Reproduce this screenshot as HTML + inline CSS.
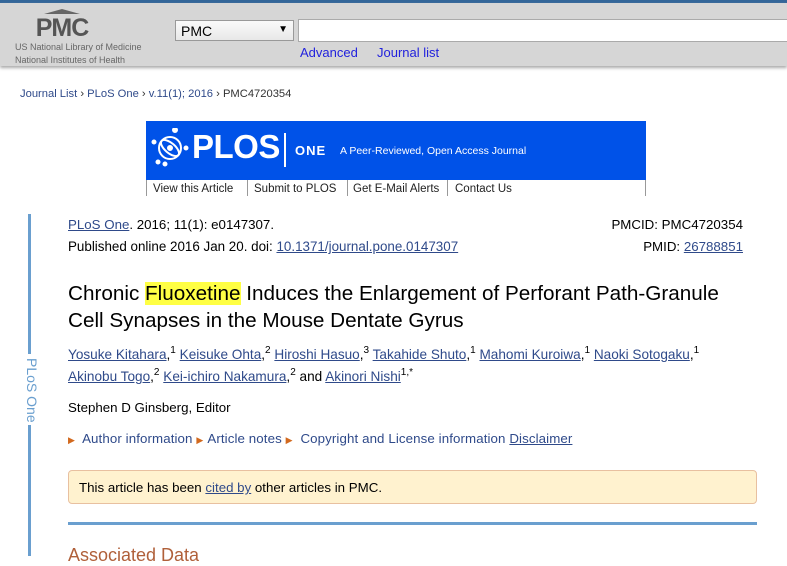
<!DOCTYPE html>
<html><head><meta charset="utf-8"><style>
*{margin:0;padding:0;box-sizing:border-box}
body{width:787px;height:556px;overflow:hidden;background:#fff;font-family:"Liberation Sans",sans-serif;position:relative;color:#000}
.a{position:absolute;white-space:nowrap}
a,.l{color:#2f4a8a;text-decoration:underline}
.nl{color:#2f4a8a;text-decoration:none}
sup{font-size:10px;line-height:0;vertical-align:0;position:relative;top:-6px}
.ar{color:#d2691e;font-size:9px;margin-right:4px}
</style></head><body>
<div class="a" style="left:0;top:0;width:787px;height:3px;background:#336699"></div>
<div class="a" style="left:0;top:3px;width:787px;height:63px;background:#d6d6d6;box-shadow:0 2px 3px #aaa"></div>
<svg class="a" style="left:32px;top:8px" width="60" height="30" viewBox="0 0 60 30">
<path d="M12 6 L30 1 L48 6 Z" fill="#666"/>
<text x="30" y="28" text-anchor="middle" font-family="Liberation Sans" font-weight="bold" font-size="25" fill="#555" letter-spacing="-1">PMC</text>
</svg>
<div class="a" style="left:15px;top:41px;font-size:9px;color:#666;line-height:13px">US National Library of Medicine<br>National Institutes of Health</div>
<div class="a" style="left:175px;top:20px;width:119px;height:21px;border:1px solid #999;background:linear-gradient(#fafafa,#e8e8e8);font-size:14px;padding:2px 5px">PMC<span style="position:absolute;right:5px;top:3px;font-size:10px">▼</span></div>
<div class="a" style="left:298px;top:19px;width:495px;height:23px;border:1px solid #aaa;background:#fff"></div>
<div class="a" style="left:300px;top:45px;font-size:13px;color:#2222dd">Advanced</div>
<div class="a" style="left:377px;top:45px;font-size:13px;color:#2222dd">Journal list</div>
<div class="a" style="left:20px;top:88px;font-size:11.2px;color:#333"><span class="nl">Journal List</span> › <span class="nl">PLoS One</span> › <span class="nl">v.11(1); 2016</span> › PMC4720354</div>
<div class="a" style="left:146px;top:121px;width:500px;height:59px;background:#0052e8"></div>
<svg class="a" style="left:150px;top:128px" width="40" height="40" viewBox="0 0 40 40" fill="none" stroke="#fff" stroke-width="2"><circle cx="20" cy="20" r="11"/><ellipse cx="20" cy="20" rx="11" ry="5" transform="rotate(40 20 20)"/><circle cx="20" cy="20" r="2" fill="#fff"/><circle cx="25" cy="2" r="2" fill="#fff"/><circle cx="4" cy="14" r="1.5" fill="#fff"/><circle cx="36" cy="20" r="1.5" fill="#fff"/><circle cx="8" cy="34" r="1.5" fill="#fff"/><circle cx="15" cy="36" r="1.5" fill="#fff"/></svg>
<div class="a" style="left:192px;top:128px;font-size:33px;font-weight:bold;color:#fff;letter-spacing:-0.5px">PLOS</div>
<div class="a" style="left:284px;top:133px;width:2px;height:34px;background:#fff"></div>
<div class="a" style="left:295px;top:143px;font-size:13px;font-weight:bold;color:#fff;letter-spacing:1px">ONE</div>
<div class="a" style="left:340px;top:145px;font-size:10.5px;color:#fff">A Peer-Reviewed, Open Access Journal</div>
<div class="a" style="left:146px;top:180px;width:500px;height:16px;background:#fff;font-size:11.5px;color:#222;border-left:1px solid #999;border-right:1px solid #999">
<span class="a" style="left:6px;top:3px">View this Article</span>
<span class="a" style="left:100px;top:0;width:1px;height:16px;background:#999"></span>
<span class="a" style="left:107px;top:3px">Submit to PLOS</span>
<span class="a" style="left:200px;top:0;width:1px;height:16px;background:#999"></span>
<span class="a" style="left:206px;top:3px">Get E-Mail Alerts</span>
<span class="a" style="left:300px;top:0;width:1px;height:16px;background:#999"></span>
<span class="a" style="left:308px;top:3px">Contact Us</span>
</div>
<div class="a" style="left:28px;top:214px;width:3px;height:140px;background:#6a9fcf"></div>
<div class="a" style="left:24px;top:358px;font-size:14px;color:#6a9fcf;writing-mode:vertical-rl">PLoS One</div>
<div class="a" style="left:28px;top:425px;width:3px;height:131px;background:#6a9fcf"></div>
<div class="a" style="left:68px;top:217px;font-size:13.3px"><a>PLoS One</a>. 2016; 11(1): e0147307.</div>
<div class="a" style="left:68px;top:239px;font-size:13.4px">Published online 2016 Jan 20. doi: <a>10.1371/journal.pone.0147307</a></div>
<div class="a" style="right:44px;top:217px;font-size:13.3px">PMCID: PMC4720354</div>
<div class="a" style="right:44px;top:239px;font-size:13.3px">PMID: <a>26788851</a></div>
<div class="a" style="left:68px;top:280px;font-size:20.7px;line-height:27px">Chronic <span style="background:#ffff44">Fluoxetine</span> Induces the Enlargement of Perforant Path-Granule<br>Cell Synapses in the Mouse Dentate Gyrus</div>
<div class="a" style="left:68px;top:344px;font-size:13.6px;line-height:22px"><a>Yosuke Kitahara</a>,<sup>1</sup> <a>Keisuke Ohta</a>,<sup>2</sup> <a>Hiroshi Hasuo</a>,<sup>3</sup> <a>Takahide Shuto</a>,<sup>1</sup> <a>Mahomi Kuroiwa</a>,<sup>1</sup> <a>Naoki Sotogaku</a>,<sup>1</sup><br><a>Akinobu Togo</a>,<sup>2</sup> <a>Kei-ichiro Nakamura</a>,<sup>2</sup> and <a>Akinori Nishi</a><sup>1,*</sup></div>
<div class="a" style="left:68px;top:400px;font-size:13.3px">Stephen D Ginsberg, Editor</div>
<div class="a" style="left:68px;top:431px;font-size:13.3px;color:#2f4a8a;letter-spacing:0.1px"><span class="ar">▶</span> Author information <span class="ar">▶</span>Article notes <span class="ar">▶</span> Copyright and License information <a>Disclaimer</a></div>
<div class="a" style="left:68px;top:470px;width:689px;height:34px;background:#fff2cf;border:1px solid #e8c0a0;border-radius:4px;font-size:13.3px;padding:9px 10px">This article has been <a>cited by</a> other articles in PMC.</div>
<div class="a" style="left:68px;top:522px;width:689px;height:3px;background:#6a9fcf"></div>
<div class="a" style="left:68px;top:545px;font-size:18px;color:#b0603a">Associated Data</div>
</body></html>
